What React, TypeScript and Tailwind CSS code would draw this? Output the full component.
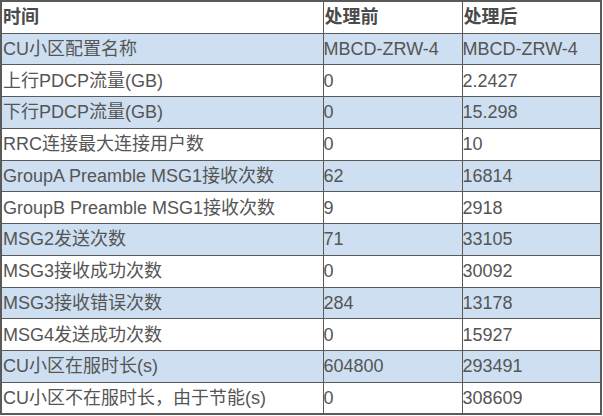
import React from "react";

const rows: [string, string, string][] = [
  ["CU小区配置名称", "MBCD-ZRW-4", "MBCD-ZRW-4"],
  ["上行PDCP流量(GB)", "0", "2.2427"],
  ["下行PDCP流量(GB)", "0", "15.298"],
  ["RRC连接最大连接用户数", "0", "10"],
  ["GroupA Preamble MSG1接收次数", "62", "16814"],
  ["GroupB Preamble MSG1接收次数", "9", "2918"],
  ["MSG2发送次数", "71", "33105"],
  ["MSG3接收成功次数", "0", "30092"],
  ["MSG3接收错误次数", "284", "13178"],
  ["MSG4发送成功次数", "0", "15927"],
  ["CU小区在服时长(s)", "604800", "293491"],
  ["CU小区不在服时长，由于节能(s)", "0", "308609"],
];

export default function App() {
  return (
    <div className="w-[603px] h-[416px] bg-white">
      <table
        className="w-[602px] border-collapse border-2 border-[#5a5a5a] text-[18px] leading-none text-[#555] table-fixed"
        style={{ fontFamily: '"Liberation Sans", Arial, "Noto Sans CJK SC", sans-serif' }}
      >
        <colgroup>
          <col className="w-[322px]" />
          <col className="w-[139px]" />
          <col />
        </colgroup>
        <thead>
          <tr className="h-[32px]">
            <th className="border border-[#5a5a5a] px-[1px] text-left font-bold text-[#4a4a4a]">时间</th>
            <th className="border border-[#5a5a5a] px-[1px] text-left font-bold text-[#4a4a4a]">处理前</th>
            <th className="border border-[#5a5a5a] px-[1px] text-left font-bold text-[#4a4a4a]">处理后</th>
          </tr>
        </thead>
        <tbody>
          {rows.map((r, i) => (
            <tr key={i} className={i % 2 === 0 ? "h-[31.75px] bg-[#cddff0]" : "h-[31.75px] bg-white"}>
              <td className="border border-[#5a5a5a] px-[1px] whitespace-nowrap">{r[0]}</td>
              <td className="border border-[#5a5a5a] px-0 whitespace-nowrap">{r[1]}</td>
              <td className="border border-[#5a5a5a] px-0 whitespace-nowrap">{r[2]}</td>
            </tr>
          ))}
        </tbody>
      </table>
    </div>
  );
}
